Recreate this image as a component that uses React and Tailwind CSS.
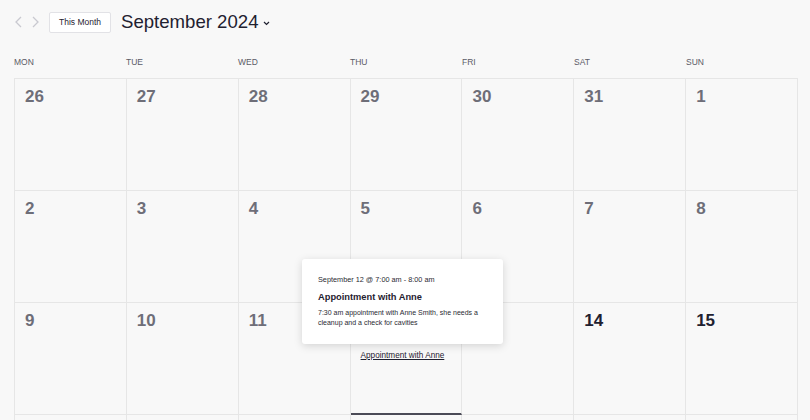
import React from "react";

const days = ["MON", "TUE", "WED", "THU", "FRI", "SAT", "SUN"];

const weeks = [
  [26, 27, 28, 29, 30, 31, 1],
  [2, 3, 4, 5, 6, 7, 8],
  [9, 10, 11, 12, 13, 14, 15],
  [16, 17, 18, 19, 20, 21, 22],
];

const Chevron = ({ dir }) => (
  <svg width="9" height="12" viewBox="0 0 9 12" fill="none" stroke="#c9c9d0" strokeWidth="1.3">
    {dir === "left" ? <polyline points="7,1 2,6 7,11" /> : <polyline points="2,1 7,6 2,11" />}
  </svg>
);

const App = () => {
  return (
    <main
      className="relative w-[810px] h-[420px] overflow-hidden bg-[#f8f8f8] pl-[14px]"
      style={{ fontFamily: '"Liberation Sans", Arial, sans-serif' }}
    >
      {/* Header */}
      <div className="flex items-center h-[44px]">
        <button className="flex items-center"><Chevron dir="left" /></button>
        <button className="flex items-center ml-[8px]"><Chevron dir="right" /></button>
        <button className="ml-[9px] h-[21px] w-[62px] bg-white border border-[#e2e2e6] rounded-[2px] text-[8.5px] text-[#1f2130]">
          This Month
        </button>
        <div className="flex items-center ml-[10px]">
          <h1 className="text-[18.6px] leading-[24px] text-[#1f2130]">September 2024</h1>
          <svg className="ml-[5px] mt-[2px]" width="7" height="5" viewBox="0 0 7 5" fill="none" stroke="#1f2130" strokeWidth="1.2">
            <polyline points="1,1 3.5,3.5 6,1" />
          </svg>
        </div>
      </div>

      {/* Day labels */}
      <div className="grid grid-cols-7 w-[784px] h-[34px] pt-[13px]">
        {days.map((d) => (
          <div key={d} className="text-[8.5px] leading-[10px] text-[#5b5b66]">{d}</div>
        ))}
      </div>

      {/* Month grid */}
      <div className="grid grid-cols-7 w-[784px] border-l border-t border-[#e6e6e6]">
        {weeks.flat().map((n, i) => {
          const isCurrent = i === 17;
          const lastRow = i >= 21;
          return (
            <div
              key={i}
              className={
                "h-[112px] border-r border-[#e6e6e6] pt-[8px] pl-[10px] " +
                (isCurrent ? "border-b-2 border-b-[#4b4b57]" : "border-b")
              }
            >
              {!lastRow && (
                <div
                  className={
                    "text-[17px] leading-[20px] font-bold " +
                    (i >= 18 ? "text-[#1f2130]" : "text-[#6e6e78]")
                  }
                >
                  {n}
                </div>
              )}
              {isCurrent && (
                <a href="#" className="block mt-[20px] text-[8.2px] leading-[10px] text-[#1f2130] underline">
                  Appointment with Anne
                </a>
              )}
            </div>
          );
        })}
      </div>

      {/* Tooltip */}
      <div className="absolute left-[302px] top-[259px] w-[201px] h-[85px] bg-white rounded-[3px] shadow-[0_2px_8px_rgba(0,0,0,0.15)] px-[16px] pt-[16px]">
        <p className="text-[7.3px] leading-[10px] text-[#2a2a33]">September 12 @ 7:00 am - 8:00 am</p>
        <h3 className="mt-[6px] text-[9.3px] leading-[12px] font-bold text-[#1f2130]">Appointment with Anne</h3>
        <p className="mt-[5px] text-[7px] leading-[10px] text-[#2a2a33]">
          7:30 am appointment with Anne Smith, she needs a cleanup and a check for cavities
        </p>
      </div>
    </main>
  );
};

export default App;
